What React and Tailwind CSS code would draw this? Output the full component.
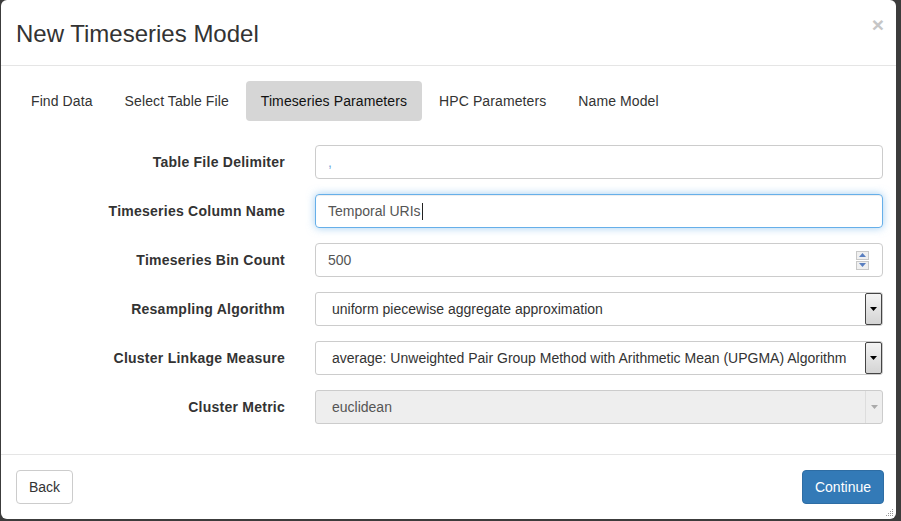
const tabs = ['Find Data', 'Select Table File', 'Timeseries Parameters', 'HPC Parameters', 'Name Model'];

function Row({ label, children }) {
  return (
    <div className="flex items-center">
      <label className="w-[269px] shrink-0 text-right text-[14px] font-bold tracking-[0.25px] text-[#333]">{label}</label>
      <div className="ml-[30px] w-[568px]">{children}</div>
    </div>
  );
}

function SelectBox({ value, disabled }) {
  return (
    <div
      className={`flex h-[34px] items-center rounded-[3px] border border-[#ccc] ${
        disabled ? 'bg-[#eee]' : 'bg-white'
      }`}
    >
      <span className={`flex-1 pl-[16px] text-[14px] ${disabled ? 'text-[#555]' : 'text-[#333]'}`}>{value}</span>
      {disabled ? (
        <div className="flex h-full w-[17px] items-center justify-center border-l border-[#ddd]">
          <svg width="7" height="4" viewBox="0 0 7 4">
            <path d="M0 0h7L3.5 4z" fill="#aaa" />
          </svg>
        </div>
      ) : (
        <div className="flex h-[32px] w-[17px] items-center justify-center rounded-[2px] border border-[#444] bg-gradient-to-b from-[#f4f4f4] to-[#d4d4d4]">
          <svg width="7" height="4" viewBox="0 0 7 4">
            <path d="M0 0h7L3.5 4z" fill="#000" />
          </svg>
        </div>
      )}
    </div>
  );
}

export default function App() {
  return (
    <div className="h-[521px] w-[901px] bg-[#3c3c3c] pb-[2px] pl-[1px] pr-[5px] font-['Liberation_Sans',Arial,sans-serif] text-[#333]">
      <div className="flex h-[519px] w-[895px] flex-col rounded-[6px] bg-white">
        {/* header */}
        <div className="flex h-[66px] shrink-0 items-center justify-between border-b border-[#e5e5e5] pl-[15px] pr-[12px] pt-[3px]">
          <h4 className="text-[24px] leading-[34px] text-[#333]">New Timeseries Model</h4>
          <span className="mb-[20px] text-[21px] font-bold leading-none text-[#c6c6c6]">×</span>
        </div>

        {/* body */}
        <div className="flex-1 pl-[15px] pr-[12px] pt-[15px]">
          <ul className="flex gap-[2px]">
            {tabs.map((t) => (
              <li
                key={t}
                className={`rounded-[4px] px-[15px] py-[10px] text-[14px] leading-[20px] tracking-[0.1px] ${
                  t === 'Timeseries Parameters' ? 'bg-[#d6d6d6] text-[#111]' : 'text-[#333]'
                }`}
              >
                {t}
              </li>
            ))}
          </ul>

          <div className="mt-[24px] flex flex-col gap-[15px]">
            <Row label="Table File Delimiter">
              <div className="flex h-[34px] items-center rounded-[4px] border border-[#ccc] px-[12px] text-[14px] text-[#6fa8dc]">
                ,
              </div>
            </Row>
            <Row label="Timeseries Column Name">
              <div className="flex h-[34px] items-center rounded-[4px] border border-[#66afe9] px-[12px] text-[14px] text-[#555] shadow-[inset_0_1px_1px_rgba(0,0,0,0.075),0_0_8px_rgba(102,175,233,0.6)]">
                Temporal URIs
                <span className="ml-[1px] h-[17px] w-[1px] bg-[#222]" />
              </div>
            </Row>
            <Row label="Timeseries Bin Count">
              <div className="flex h-[34px] items-center justify-between rounded-[4px] border border-[#ccc] pl-[12px] pr-[13px] text-[14px] text-[#555]">
                500
                <div className="flex flex-col gap-[1px]">
                  <div className="flex h-[9px] w-[13px] items-center justify-center border border-[#c8c8c8] bg-[#f0f0f0]">
                    <svg width="7" height="4" viewBox="0 0 7 4">
                      <path d="M0 4h7L3.5 0z" fill="#5a7fc0" />
                    </svg>
                  </div>
                  <div className="flex h-[9px] w-[13px] items-center justify-center border border-[#c8c8c8] bg-[#f0f0f0]">
                    <svg width="7" height="4" viewBox="0 0 7 4">
                      <path d="M0 0h7L3.5 4z" fill="#5a7fc0" />
                    </svg>
                  </div>
                </div>
              </div>
            </Row>
            <Row label="Resampling Algorithm">
              <SelectBox value="uniform piecewise aggregate approximation" />
            </Row>
            <Row label="Cluster Linkage Measure">
              <SelectBox value="average: Unweighted Pair Group Method with Arithmetic Mean (UPGMA) Algorithm" />
            </Row>
            <Row label="Cluster Metric">
              <SelectBox value="euclidean" disabled />
            </Row>
          </div>
        </div>

        {/* footer */}
        <div className="relative flex h-[65px] shrink-0 items-center justify-between border-t border-[#e5e5e5] pl-[15px] pr-[12px]">
          <button className="h-[34px] rounded-[4px] border border-[#ccc] bg-white px-[12px] text-[14px] text-[#333]">
            Back
          </button>
          <button className="h-[34px] rounded-[4px] border border-[#2e6da4] bg-[#337ab7] px-[12px] text-[14px] text-white">
            Continue
          </button>
          <svg className="absolute bottom-[2px] right-[2px]" width="8" height="8" viewBox="0 0 8 8">
            <g fill="#999">
              <rect x="6" y="0" width="1" height="1" />
              <rect x="4" y="2" width="1" height="1" />
              <rect x="6" y="2" width="1" height="1" />
              <rect x="2" y="4" width="1" height="1" />
              <rect x="4" y="4" width="1" height="1" />
              <rect x="6" y="4" width="1" height="1" />
              <rect x="0" y="6" width="1" height="1" />
              <rect x="2" y="6" width="1" height="1" />
              <rect x="4" y="6" width="1" height="1" />
              <rect x="6" y="6" width="1" height="1" />
            </g>
          </svg>
        </div>
      </div>
    </div>
  );
}
